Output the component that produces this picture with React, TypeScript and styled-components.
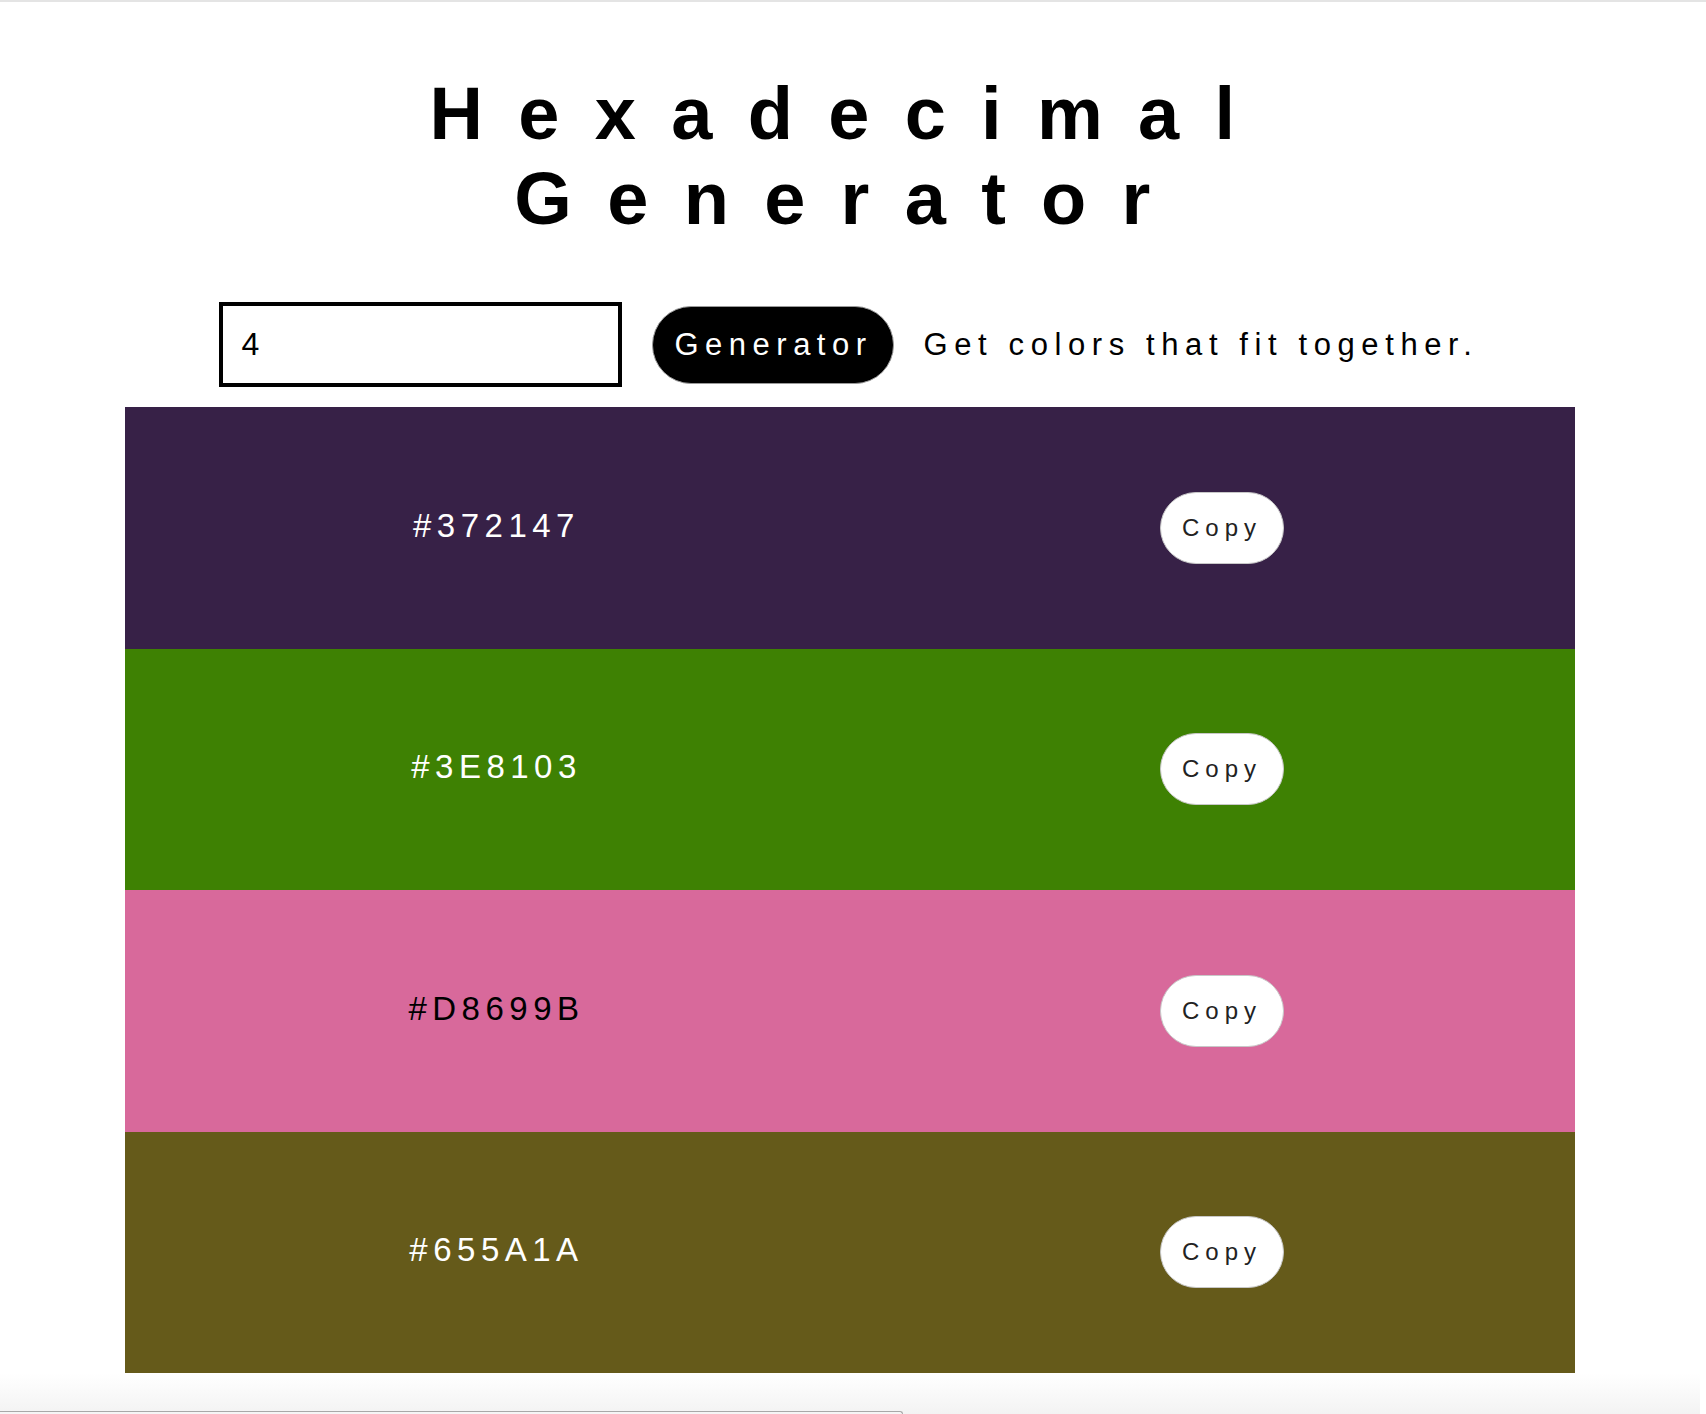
import React, { useState } from "react";
import styled, { createGlobalStyle } from "styled-components";

const GlobalStyle = createGlobalStyle`
  html, body {
    margin: 0;
    padding: 0;
    background: #ffffff;
  }
  body {
    font-family: "Liberation Sans", Arial, sans-serif;
    color: #000;
    border-top: 2px solid #e4e4e4;
  }
  * {
    box-sizing: border-box;
  }
`;

type Swatch = {
  hex: string;
  ink: string;
};

const palette: Swatch[] = [
  { hex: "#372147", ink: "#ffffff" },
  { hex: "#3E8103", ink: "#ffffff" },
  { hex: "#D8699B", ink: "#000000" },
  { hex: "#655A1A", ink: "#ffffff" },
];

const App = () => {
  const [count, setCount] = useState("4");

  return (
    <Page>
      <GlobalStyle />
      <Title>
        Hexadecimal
        <br />
        Generator
      </Title>
      <Controls>
        <CountInput
          value={count}
          onChange={(e) => setCount(e.target.value)}
        />
        <GenerateButton>Generator</GenerateButton>
        <Tagline>Get colors that fit together.</Tagline>
      </Controls>
      <Palette>
        {palette.map((c) => (
          <ColorRow key={c.hex} $bg={c.hex}>
            <HexLabel $ink={c.ink}>{c.hex}</HexLabel>
            <CopyCell>
              <CopyButton>Copy</CopyButton>
            </CopyCell>
          </ColorRow>
        ))}
      </Palette>
      <BottomFade>
        <Shelf />
      </BottomFade>
    </Page>
  );
};

export default App;

const Page = styled.div`
  padding: 69px 6px 0 0;
  min-height: 1412px;
  display: flex;
  flex-direction: column;
`;

const Title = styled.h1`
  margin: 0;
  font-size: 74px;
  font-weight: 700;
  line-height: 85px;
  letter-spacing: 35.3px;
  text-align: center;
  color: #000;
`;

const Controls = styled.div`
  display: flex;
  align-items: center;
  justify-content: center;
  gap: 30px;
  margin-top: 61px;
  padding-right: 2px;
`;

const CountInput = styled.input`
  width: 403px;
  height: 85px;
  border: 4px solid #000;
  padding: 0 18px;
  font-family: "Liberation Sans", Arial, sans-serif;
  font-size: 32px;
  color: #000;
  outline: none;
  border-radius: 0;
`;

const GenerateButton = styled.button`
  background: #000;
  color: #fff;
  border: 1px solid #9a9a9a;
  border-radius: 40px;
  padding: 20px 20px 20px 21px;
  font-family: "Liberation Sans", Arial, sans-serif;
  font-size: 31px;
  letter-spacing: 6.5px;
  cursor: pointer;
`;

const Tagline = styled.p`
  margin: 0;
  font-size: 31px;
  letter-spacing: 6.6px;
  color: #000;
`;

const Palette = styled.div`
  width: 1450px;
  margin: 20px auto 0;
`;

const ColorRow = styled.div<{ $bg: string }>`
  height: 241.5px;
  background: ${(p) => p.$bg};
  display: grid;
  grid-template-columns: 1fr 1fr;
  align-items: center;
  justify-items: center;
  padding-left: 12px;
`;

const HexLabel = styled.p<{ $ink: string }>`
  margin: 0 0 4px;
  font-size: 33px;
  letter-spacing: 5.5px;
  color: ${(p) => p.$ink};
`;

const CopyCell = styled.div`
  display: flex;
  justify-content: center;
  padding-left: 13px;
`;

const CopyButton = styled.button`
  background: #fff;
  color: #222;
  border: 1px solid #c8c8c8;
  border-radius: 40px;
  padding: 21px 21px;
  font-family: "Liberation Sans", Arial, sans-serif;
  font-size: 24px;
  letter-spacing: 6px;
  cursor: pointer;
`;

const BottomFade = styled.div`
  flex: 1;
  display: flex;
  align-items: flex-end;
  background: linear-gradient(to bottom, #ffffff 0%, #f3f3f3 100%);
`;

const Shelf = styled.div`
  width: 903px;
  height: 3px;
  border-top: 1px solid #a8a8a8;
  border-right: 1px solid #a8a8a8;
  border-top-right-radius: 6px;
  background: #f5f5f5;
`;
